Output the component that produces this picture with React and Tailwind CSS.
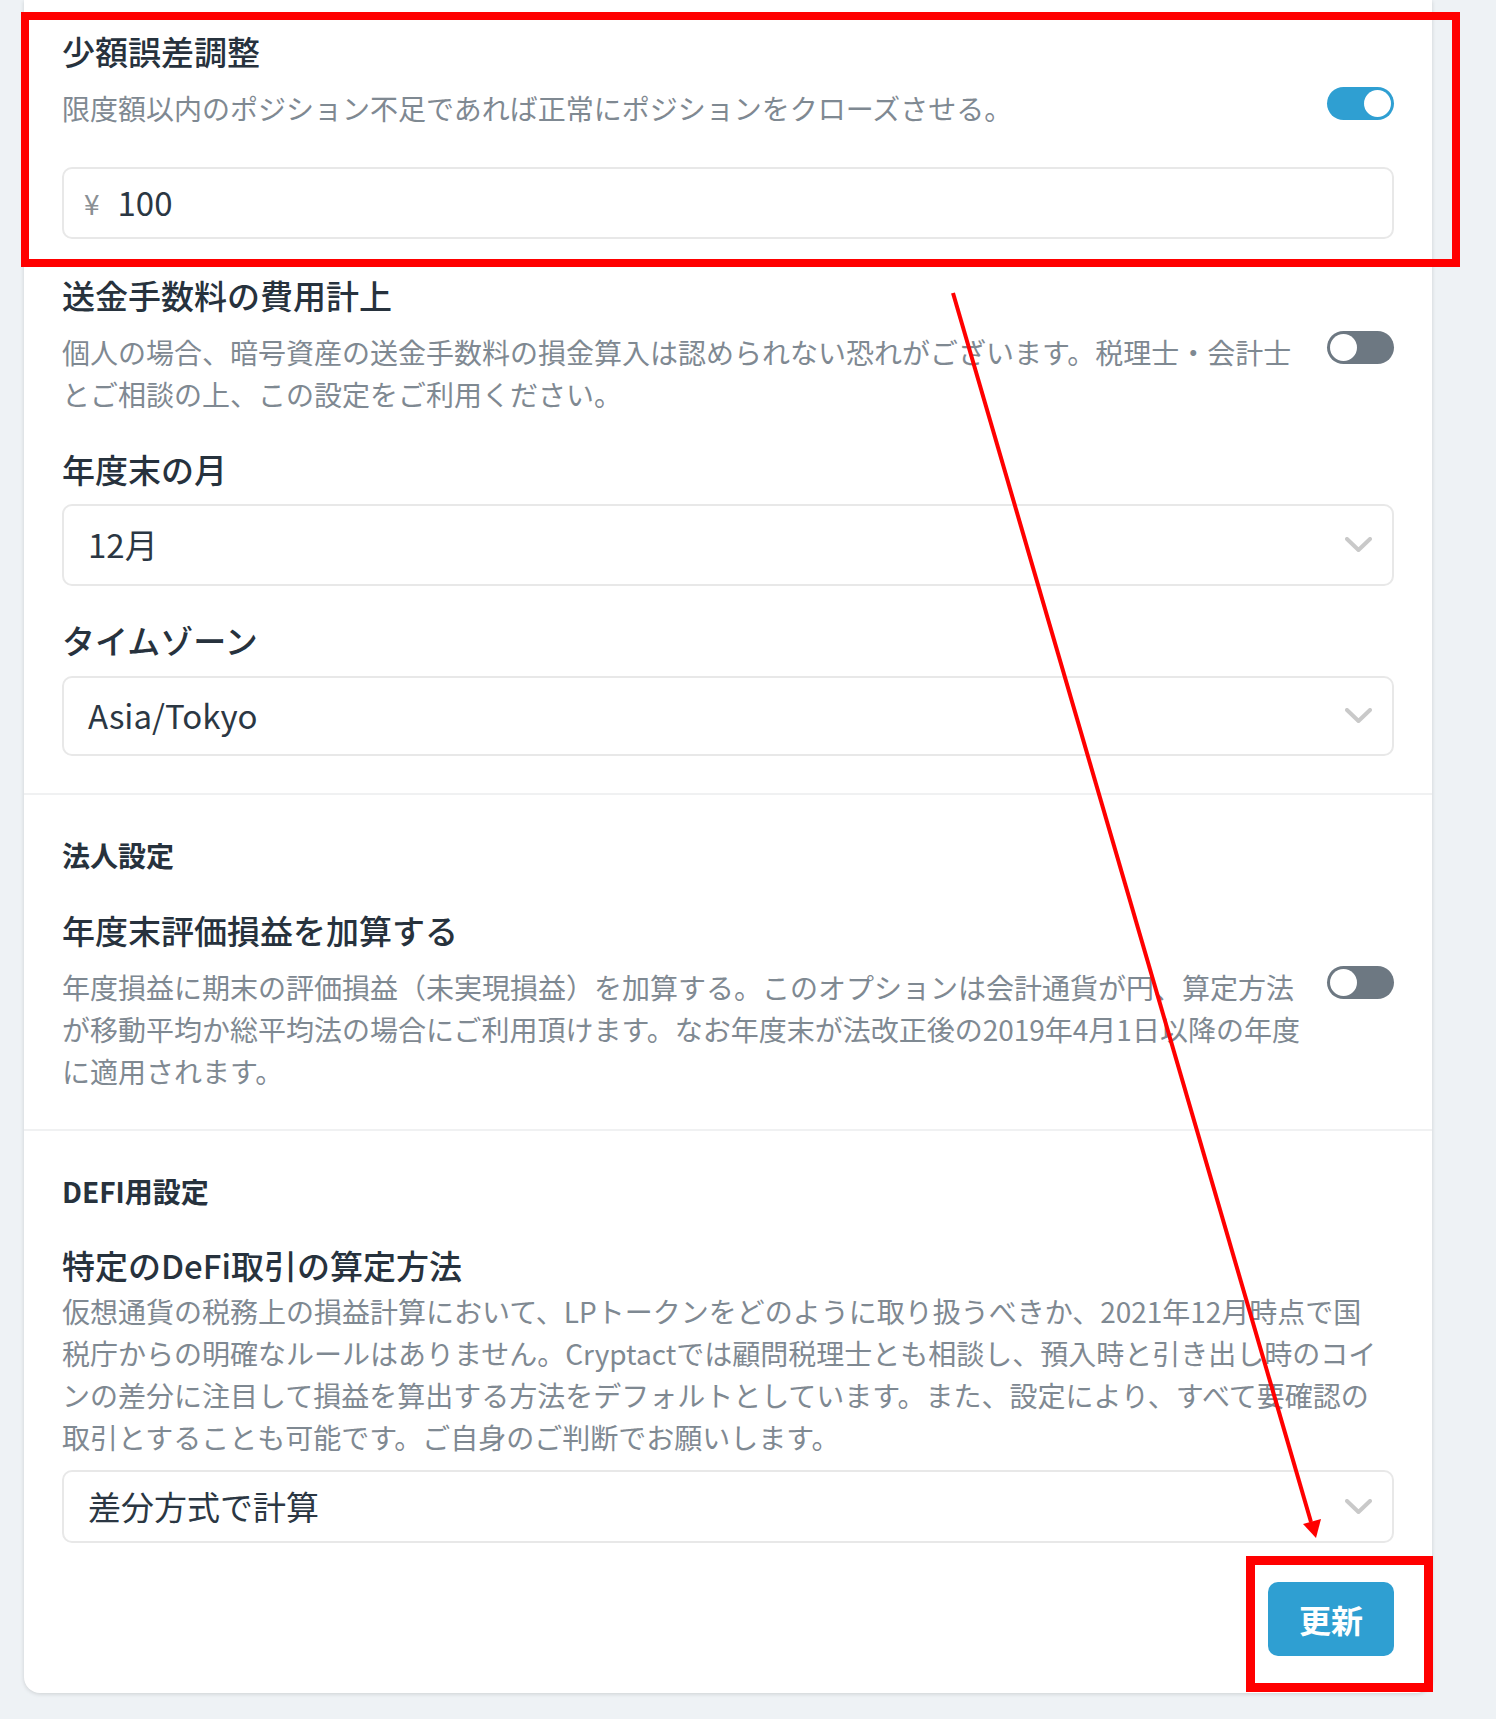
import React, { useState } from 'react';

const FONT = "font-['Noto_Sans_CJK_JP','Noto_Sans',sans-serif]";

function Toggle({ on, onChange }) {
  return (
    <button
      type="button"
      onClick={onChange}
      className={`shrink-0 w-[67px] h-[33px] rounded-full p-[3px] flex items-center ${on ? 'bg-[#2f9fd2] justify-end' : 'bg-[#6d7882] justify-start'}`}
    >
      <span className="block w-[27px] h-[27px] rounded-full bg-white" />
    </button>
  );
}

function Chevron() {
  return (
    <svg width="27" height="16" viewBox="0 0 27 16" fill="none" className="shrink-0">
      <polyline points="2,2 13.5,13 25,2" stroke="#c9c9c9" strokeWidth="4" strokeLinecap="round" strokeLinejoin="round" />
    </svg>
  );
}

function Select({ value, h }) {
  return (
    <div className={`flex items-center justify-between border-2 border-[#e8e8e8] rounded-[10px] pl-[24px] pr-[20px] ${h}`}>
      <span className="text-[33px] text-[#2b3743]">{value}</span>
      <Chevron />
    </div>
  );
}

const title = 'text-[33px] leading-[44px] font-medium text-[#27323d]';
const desc = 'text-[28px] leading-[42px] text-[#7f8992]';
const header = 'text-[28px] leading-[40px] font-bold text-[#27323d]';

export default function App() {
  const [smallDiff, setSmallDiff] = useState(true);
  const [feeExpense, setFeeExpense] = useState(false);
  const [unrealized, setUnrealized] = useState(false);

  return (
    <div className={`relative min-h-[1719px] bg-[#eef2f5] ${FONT}`}>
      <div className="ml-[24px] w-[1408px] bg-white rounded-b-[16px] shadow-[0_1px_4px_rgba(0,0,0,0.14)]">

        {/* General */}
        <div className="px-[38px] pt-[29px] pb-[37px] border-b-2 border-[#f0f1f2]">
          <div className={title}>少額誤差調整</div>
          <div className="mt-[14px] flex items-start gap-[16px]">
            <p className={`flex-1 ${desc}`}>限度額以内のポジション不足であれば正常にポジションをクローズさせる。</p>
            <Toggle on={smallDiff} onChange={() => setSmallDiff(!smallDiff)} />
          </div>
          <div className="mt-[38px] h-[72px] flex items-center gap-[18px] border-2 border-[#e8e8e8] rounded-[10px] pl-[20px]">
            <span className="text-[28px] text-[#8a8f94]">¥</span>
            <span className="text-[33px] text-[#2b3743]">100</span>
          </div>

          <div className={`mt-[34px] ${title}`}>送金手数料の費用計上</div>
          <div className="mt-[14px] flex items-start gap-[16px]">
            <p className={`flex-1 ${desc}`}>個人の場合、暗号資産の送金手数料の損金算入は認められない恐れがございます。税理士・会計士とご相談の上、この設定をご利用ください。</p>
            <Toggle on={feeExpense} onChange={() => setFeeExpense(!feeExpense)} />
          </div>

          <div className={`mt-[32px] ${title}`}>年度末の月</div>
          <div className="mt-[13px]">
            <Select value="12月" h="h-[82px]" />
          </div>

          <div className={`mt-[32px] ${title}`}>タイムゾーン</div>
          <div className="mt-[14px]">
            <Select value="Asia/Tokyo" h="h-[80px]" />
          </div>
        </div>

        {/* Corporate */}
        <div className="px-[38px] pt-[40px] pb-[37px] border-b-2 border-[#f0f1f2]">
          <div className={header}>法人設定</div>
          <div className={`mt-[33px] ${title}`}>年度末評価損益を加算する</div>
          <div className="mt-[14px] flex items-start gap-[16px]">
            <p className={`flex-1 ${desc}`}>年度損益に期末の評価損益（未実現損益）を加算する。このオプションは会計通貨が円、算定方法が移動平均か総平均法の場合にご利用頂けます。なお年度末が法改正後の2019年4月1日以降の年度に適用されます。</p>
            <Toggle on={unrealized} onChange={() => setUnrealized(!unrealized)} />
          </div>
        </div>

        {/* DeFi */}
        <div className="px-[38px] pt-[40px] pb-[37px]">
          <div className={header}>DEFI用設定</div>
          <div className={`mt-[32px] ${title}`}>特定のDeFi取引の算定方法</div>
          <p className={`mt-[3px] pr-[12px] ${desc}`}>仮想通貨の税務上の損益計算において、LPトークンをどのように取り扱うべきか、2021年12月時点で国税庁からの明確なルールはありません。Cryptactでは顧問税理士とも相談し、預入時と引き出し時のコインの差分に注目して損益を算出する方法をデフォルトとしています。また、設定により、すべて要確認の取引とすることも可能です。ご自身のご判断でお願いします。</p>
          <div className="mt-[12px]">
            <Select value="差分方式で計算" h="h-[73px]" />
          </div>
          <div className="mt-[39px] flex justify-end">
            <button type="button" className="w-[126px] h-[74px] rounded-[10px] bg-[#2f9fd2] text-white text-[32px] font-bold">
              更新
            </button>
          </div>
        </div>
      </div>

      {/* Annotation overlay */}
      <svg className="absolute inset-0 pointer-events-none" width="1496" height="1719" viewBox="0 0 1496 1719">
        <rect x="25" y="16" width="1431" height="247" fill="none" stroke="#ff0000" strokeWidth="8" />
        <rect x="1250.5" y="1560.5" width="178" height="127" fill="none" stroke="#ff0000" strokeWidth="9" />
        <line x1="953" y1="293" x2="1311" y2="1522" stroke="#ff0000" strokeWidth="4" />
        <polygon points="1303,1524 1321,1519 1316,1538" fill="#ff0000" />
      </svg>
    </div>
  );
}
